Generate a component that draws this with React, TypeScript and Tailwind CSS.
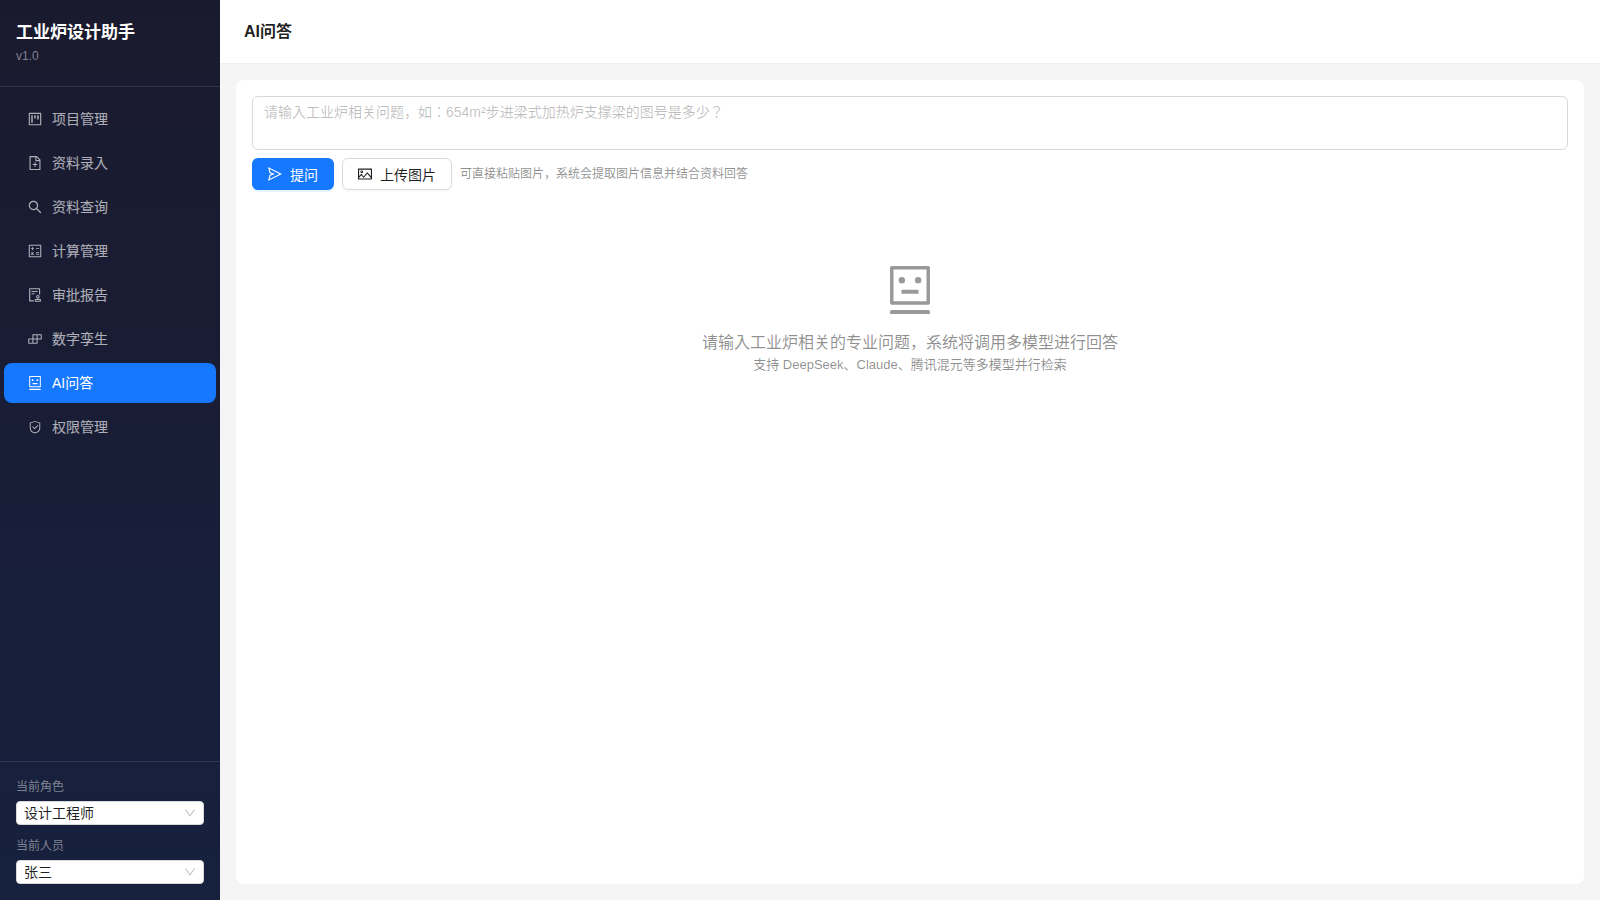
import {
  AiOutlineAudit,
  AiOutlineBuild,
  AiOutlineCalculator,
  AiOutlineDown,
  AiOutlineFileAdd,
  AiOutlinePicture,
  AiOutlineProject,
  AiOutlineRobot,
  AiOutlineSafety,
  AiOutlineSearch,
  AiOutlineSend,
} from 'react-icons/ai';

// trims the built-in margin of the icon set
const ICON_BOX = '64 64 896 896';

const menuItems = [
  { key: 'projects', label: '项目管理', icon: AiOutlineProject },
  { key: 'entry', label: '资料录入', icon: AiOutlineFileAdd },
  { key: 'search', label: '资料查询', icon: AiOutlineSearch },
  { key: 'calc', label: '计算管理', icon: AiOutlineCalculator },
  { key: 'audit', label: '审批报告', icon: AiOutlineAudit },
  { key: 'twin', label: '数字孪生', icon: AiOutlineBuild },
  { key: 'qa', label: 'AI问答', icon: AiOutlineRobot },
  { key: 'auth', label: '权限管理', icon: AiOutlineSafety, box: '0 0 1024 1024' },
];

function SelectBox({ label, value }: { label: string; value: string }) {
  return (
    <div>
      <div className="mb-1 text-xs leading-[18.86px] text-white/45">{label}</div>
      <button className="flex h-6 w-full items-center justify-between rounded-sm border border-[#d9d9d9] bg-white px-[7px] text-sm leading-[22px] text-black/88">
        <span>{value}</span>
        <AiOutlineDown viewBox={ICON_BOX} className="size-3 text-black/25" />
      </button>
    </div>
  );
}

function Sidebar({ active }: { active: string }) {
  return (
    <aside className="flex w-[220px] shrink-0 flex-col bg-linear-to-b from-[#1a1a2e] to-[#16213e]">
      <div className="h-[87px] border-b border-white/10 px-4 pt-5">
        <h1 className="text-[17px] font-bold leading-[26px] text-white">工业炉设计助手</h1>
        <div className="mt-px text-xs leading-[19px] text-white/45">v1.0</div>
      </div>

      <nav className="flex flex-1 flex-col gap-1 px-1 pt-3">
        {menuItems.map(({ key, label, icon: Icon, box = ICON_BOX }) => (
          <a
            key={key}
            className={`flex h-10 items-center gap-2.5 rounded-lg pl-6 text-sm ${
              key === active ? 'bg-[#1677ff] text-white' : 'text-white/65'
            }`}
          >
            <Icon viewBox={box} className="size-3.5" />
            <span>{label}</span>
          </a>
        ))}
      </nav>

      <div className="flex flex-col gap-3 border-t border-white/10 p-4">
        <SelectBox label="当前角色" value="设计工程师" />
        <SelectBox label="当前人员" value="张三" />
      </div>
    </aside>
  );
}

export default function App() {
  return (
    <div className="flex h-screen bg-[#f5f5f5] font-['Liberation_Sans','Noto_Sans_CJK_JP',sans-serif] text-black/88">
      <Sidebar active="qa" />

      <div className="flex min-w-0 flex-1 flex-col">
        <header className="flex h-16 shrink-0 items-center border-b border-[#f0f0f0] bg-white px-6">
          <h2 className="text-base font-bold">AI问答</h2>
        </header>

        <main className="m-4 flex-1 rounded-lg bg-white p-4">
          <textarea
            rows={2}
            className="block h-[54px] w-full resize-none rounded-md border border-[#d9d9d9] bg-white px-[11px] py-1 text-sm leading-[22px] outline-none placeholder:text-black/25"
            placeholder="请输入工业炉相关问题，如：654m²步进梁式加热炉支撑梁的图号是多少？"
          />

          <div className="mt-2 flex items-center gap-2">
            <button className="flex h-8 items-center gap-2 rounded-md bg-[#1677ff] px-4 text-sm text-white shadow-[0_2px_0_rgba(5,145,255,0.1)]">
              <AiOutlineSend viewBox={ICON_BOX} className="size-3.5" />
              <span className="pt-0.5">提问</span>
            </button>
            <button className="flex h-8 items-center gap-2 rounded-md border border-[#d9d9d9] bg-white px-[15px] text-sm shadow-[0_2px_0_rgba(0,0,0,0.02)]">
              <AiOutlinePicture viewBox={ICON_BOX} className="size-3.5" />
              <span className="pt-0.5">上传图片</span>
            </button>
            <span className="text-xs text-black/45">可直接粘贴图片，系统会提取图片信息并结合资料回答</span>
          </div>

          <div className="flex flex-col items-center pt-[76px] text-black/45">
            <AiOutlineRobot viewBox={ICON_BOX} className="size-12 text-[#999]" />
            <p className="mt-[17px] text-base leading-6">请输入工业炉相关的专业问题，系统将调用多模型进行回答</p>
            <p className="text-[13px] leading-5">支持 DeepSeek、Claude、腾讯混元等多模型并行检索</p>
          </div>
        </main>
      </div>
    </div>
  );
}
